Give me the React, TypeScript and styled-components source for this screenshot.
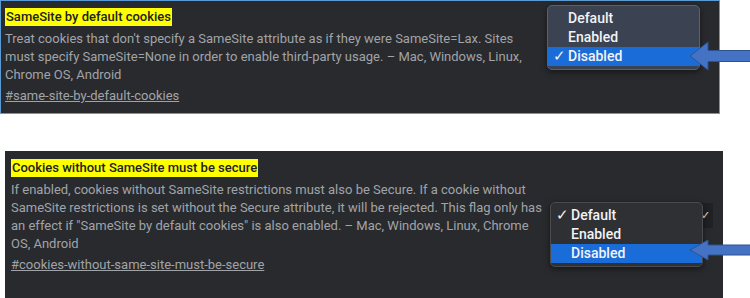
import React from "react";
import styled, { createGlobalStyle } from "styled-components";

const Global = createGlobalStyle`
  html, body { margin: 0; padding: 0; background: #ffffff; }
  body { font-family: Roboto, "Liberation Sans", sans-serif; }
`;

const Page = styled.div`
  position: relative;
  width: 750px;
  height: 298px;
  overflow: hidden;
  display: flex;
  flex-direction: column;
  gap: 37px;
`;

const Panel = styled.section<{ $bordered?: boolean; $indent: number; $w: number; $h: number }>`
  position: relative;
  box-sizing: border-box;
  margin-left: ${(p) => p.$indent}px;
  width: ${(p) => p.$w}px;
  height: ${(p) => p.$h}px;
  background: #292a2d;
  border: ${(p) => (p.$bordered ? "1px solid #5b9bd5" : "none")};
  padding: ${(p) => (p.$bordered ? "6px 0 0 4px" : "7px 0 0 6px")};
  display: flex;
  flex-direction: column;
`;

const Title = styled.div`
  line-height: 18px;
  margin-bottom: 4px;
`;

const Mark = styled.span`
  display: inline-block;
  background: #ffff00;
  color: #202124;
  font-size: 13px;
  font-weight: 500;
  line-height: 18px;
  padding: 0 1px;
`;

const Desc = styled.div`
  color: #a0a4a9;
  font-size: 13px;
  line-height: 18px;
  white-space: nowrap;
`;

const Anchor = styled.a`
  margin-top: 3px;
  color: #a0a4a9;
  font-size: 13px;
  line-height: 18px;
  text-decoration: underline;
  align-self: flex-start;
`;

const SelectBox = styled.div<{ $left: number; $top: number }>`
  position: absolute;
  left: ${(p) => p.$left}px;
  top: ${(p) => p.$top}px;
  width: 160px;
  height: 25px;
  box-sizing: border-box;
  background: #202124;
  color: #e8eaed;
  font-size: 11px;
  display: flex;
  justify-content: flex-end;
  align-items: center;
  padding-right: 3px;
`;

const Menu = styled.div<{ $left: number; $top: number; $tone: "blue" | "gray" }>`
  position: absolute;
  left: ${(p) => p.$left}px;
  top: ${(p) => p.$top}px;
  width: 153px;
  box-sizing: border-box;
  padding: 3px 0;
  border-radius: 5px;
  background: ${(p) => (p.$tone === "blue" ? "#3b4252" : "#2f3034")};
  border: 1px solid ${(p) => (p.$tone === "blue" ? "#596173" : "#4a4b50")};
  box-shadow: 0 2px 6px rgba(0, 0, 0, 0.5);
  overflow: hidden;
`;

const Item = styled.div<{ $selected?: boolean }>`
  position: relative;
  height: 19px;
  line-height: 19px;
  padding-left: 20px;
  font-size: 14px;
  font-weight: 500;
  color: #f2f3f5;
  background: ${(p) => (p.$selected ? "#1a6dd8" : "transparent")};
`;

const Check = styled.span`
  position: absolute;
  left: 5px;
  top: 0;
  font-size: 15px;
  font-weight: 300;
`;

const ArrowSvg = styled.svg<{ $top: number }>`
  position: absolute;
  left: 688px;
  top: ${(p) => p.$top}px;
  overflow: visible;
`;

type Opt = { label: string; checked?: boolean; selected?: boolean };

const Dropdown = ({ left, top, tone, options }: { left: number; top: number; tone: "blue" | "gray"; options: Opt[] }) => (
  <Menu $left={left} $top={top} $tone={tone}>
    {options.map((o) => (
      <Item key={o.label} $selected={o.selected}>
        {o.checked && <Check>✓</Check>}
        {o.label}
      </Item>
    ))}
  </Menu>
);

const Arrow = ({ top, head, shaft }: { top: number; head: number; shaft: number }) => {
  const h = head;
  const c = h / 2;
  const s = shaft / 2;
  const d = `M2 ${c} L20 0 L20 ${c - s} L64 ${c - s} L64 ${c + s} L20 ${c + s} L20 ${h} Z`;
  return (
    <ArrowSvg $top={top} width="62" height={h}>
      <path d={d} fill="#4472c4" stroke="#2f528f" strokeWidth="1" />
    </ArrowSvg>
  );
};

export default function App() {
  return (
    <>
      <Global />
      <Page>
        <Panel $bordered $indent={0} $w={720} $h={114}>
          <Title>
            <Mark>SameSite by default cookies</Mark>
          </Title>
          <Desc>
            Treat cookies that don't specify a SameSite attribute as if they were SameSite=Lax. Sites
            <br />
            must specify SameSite=None in order to enable third-party usage. – Mac, Windows, Linux,
            <br />
            Chrome OS, Android
          </Desc>
          <Anchor>#same-site-by-default-cookies</Anchor>
          <Dropdown
            left={546}
            top={4}
            tone="blue"
            options={[
              { label: "Default" },
              { label: "Enabled" },
              { label: "Disabled", checked: true, selected: true },
            ]}
          />
        </Panel>
        <Panel $indent={5} $w={718} $h={148}>
          <Title>
            <Mark>Cookies without SameSite must be secure</Mark>
          </Title>
          <Desc>
            If enabled, cookies without SameSite restrictions must also be Secure. If a cookie without
            <br />
            SameSite restrictions is set without the Secure attribute, it will be rejected. This flag only has
            <br />
            an effect if "SameSite by default cookies" is also enabled. – Mac, Windows, Linux, Chrome
            <br />
            OS, Android
          </Desc>
          <Anchor>#cookies-without-same-site-must-be-secure</Anchor>
          <SelectBox $left={548} $top={52}>✓</SelectBox>
          <Dropdown
            left={545}
            top={51}
            tone="gray"
            options={[
              { label: "Default", checked: true },
              { label: "Enabled" },
              { label: "Disabled", selected: true },
            ]}
          />
        </Panel>
        <Arrow top={42} head={28} shaft={11} />
        <Arrow top={240} head={20} shaft={10} />
      </Page>
    </>
  );
}
